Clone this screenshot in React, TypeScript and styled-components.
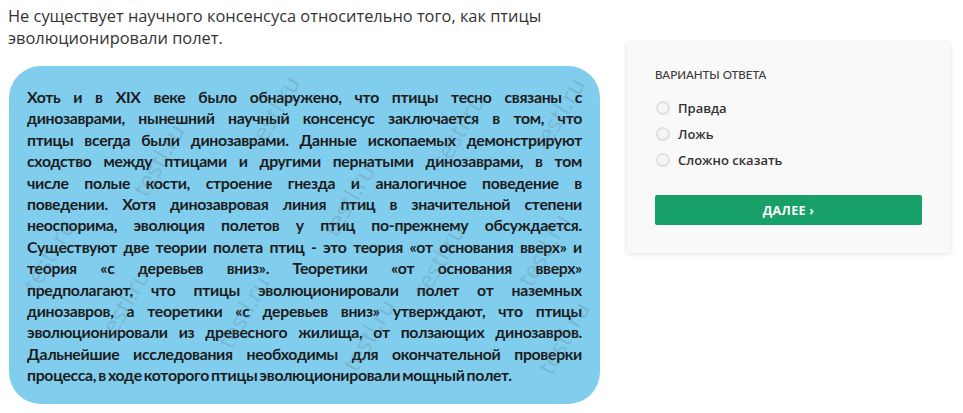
import * as React from "react";
import styled, { createGlobalStyle } from "styled-components";

const GlobalStyle = createGlobalStyle`
  html, body {
    margin: 0;
    padding: 0;
    background: #ffffff;
  }
  body {
    font-family: "Open Sans", "Liberation Sans", sans-serif;
    color: #333333;
  }
`;

const Page = styled.div`
  display: flex;
  align-items: flex-start;
  padding: 0 8px;
  width: 963px;
  box-sizing: border-box;
  overflow: hidden;
  height: 413px;
`;

const LeftColumn = styled.div`
  width: 594px;
  flex-shrink: 0;
`;

const Question = styled.p`
  margin: 5px 0 0 0;
  font-size: 16.4px;
  line-height: 22px;
  color: #333333;
`;

const Picture = styled.div`
  position: relative;
  margin-top: 17px;
  margin-left: 1px;
  width: 591px;
  height: 338px;
  box-sizing: border-box;
  padding: 20px 18px 0 18px;
  background: #80cdee;
  border-radius: 32px;
  overflow: hidden;
`;

const PictureLine = styled.div<{ $last?: boolean }>`
  position: relative;
  z-index: 1;
  font-family: "Lato", "Open Sans", sans-serif;
  font-weight: 700;
  font-size: 15.8px;
  line-height: 21.4px;
  letter-spacing: -0.3px;
  color: #1c1c1c;
  white-space: nowrap;
  text-align: justify;
  text-align-last: ${(p) => (p.$last ? "left" : "justify")};
  word-spacing: ${(p) => (p.$last ? "-1.5px" : "0")};
`;

const Watermark = styled.span`
  position: absolute;
  z-index: 2;
  font-family: "Open Sans", sans-serif;
  font-size: 24px;
  line-height: 24px;
  color: rgba(100, 110, 120, 0.24);
  transform: rotate(-60deg);
  transform-origin: left bottom;
  white-space: nowrap;
  pointer-events: none;
`;

const RightColumn = styled.div`
  margin-left: 25px;
  margin-top: 42px;
  width: 323px;
  flex-shrink: 0;
`;

const Card = styled.div`
  background: #f9f9f9;
  box-shadow: 0 1px 5px rgba(0, 0, 0, 0.12);
  padding: 26px 28px 28px 28px;
`;

const CardTitle = styled.div`
  font-family: "Lato", "Open Sans", sans-serif;
  font-size: 11.5px;
  font-weight: 500;
  text-transform: uppercase;
  color: #3c3c3c;
  margin-bottom: 18px;
`;

const Options = styled.div`
  display: flex;
  flex-direction: column;
  gap: 8px;
`;

const Option = styled.label`
  display: flex;
  align-items: center;
  gap: 8px;
  font-family: "Open Sans", sans-serif;
  font-size: 13px;
  font-weight: 600;
  color: #333333;
  height: 18px;
`;

const RadioCircle = styled.span`
  width: 10px;
  height: 10px;
  margin-left: 1px;
  border-radius: 50%;
  border: 2px solid #e0e0e0;
  background: #f5f5f5;
  flex-shrink: 0;
`;

const NextButton = styled.button`
  margin-top: 26px;
  width: 100%;
  height: 30px;
  border: none;
  border-radius: 2px;
  background: #17a067;
  color: #ffffff;
  font-family: "Open Sans", sans-serif;
  font-size: 12.5px;
  font-weight: 700;
  letter-spacing: 0.3px;
  cursor: pointer;
`;

const lines = [
  "Хоть и в XIX веке было обнаружено, что птицы тесно связаны с",
  "динозаврами, нынешний научный консенсус заключается в том, что",
  "птицы всегда были динозаврами. Данные ископаемых демонстрируют",
  "сходство между птицами и другими пернатыми динозаврами, в том",
  "числе полые кости, строение гнезда и аналогичное поведение в",
  "поведении. Хотя динозавровая линия птиц в значительной степени",
  "неоспорима, эволюция полетов у птиц по-прежнему обсуждается.",
  "Существуют две теории полета птиц - это теория «от основания вверх» и",
  "теория «с деревьев вниз». Теоретики «от основания вверх»",
  "предполагают, что птицы эволюционировали полет от наземных",
  "динозавров, а теоретики «с деревьев вниз» утверждают, что птицы",
  "эволюционировали из древесного жилища, от ползающих динозавров.",
  "Дальнейшие исследования необходимы для окончательной проверки",
  "процесса, в ходе которого птицы эволюционировали мощный полет.",
];

const marks = [
  { x: 255, y: 62 },
  { x: 440, y: 80 },
  { x: 540, y: 64 },
  { x: 140, y: 110 },
  { x: 30, y: 205 },
  { x: 330, y: 150 },
  { x: 105, y: 255 },
  { x: 225, y: 262 },
  { x: 420, y: 210 },
  { x: 525, y: 200 },
  { x: 350, y: 285 },
  { x: 545, y: 288 },
];

export default function App() {
  return (
    <>
      <GlobalStyle />
      <Page>
        <LeftColumn>
          <Question>
            Не существует научного консенсуса относительно того, как птицы эволюционировали полет.
          </Question>
          <Picture>
            {lines.map((l, i) => (
              <PictureLine key={i} $last={i === lines.length - 1}>
                {l}
              </PictureLine>
            ))}
            {marks.map((m, i) => (
              <Watermark key={i} style={{ left: m.x, top: m.y }}>
                testl.ru
              </Watermark>
            ))}
          </Picture>
        </LeftColumn>
        <RightColumn>
          <Card>
            <CardTitle>Варианты ответа</CardTitle>
            <Options>
              <Option>
                <RadioCircle />
                Правда
              </Option>
              <Option>
                <RadioCircle />
                Ложь
              </Option>
              <Option>
                <RadioCircle />
                Сложно сказать
              </Option>
            </Options>
            <NextButton>ДАЛЕЕ ›</NextButton>
          </Card>
        </RightColumn>
      </Page>
    </>
  );
}
